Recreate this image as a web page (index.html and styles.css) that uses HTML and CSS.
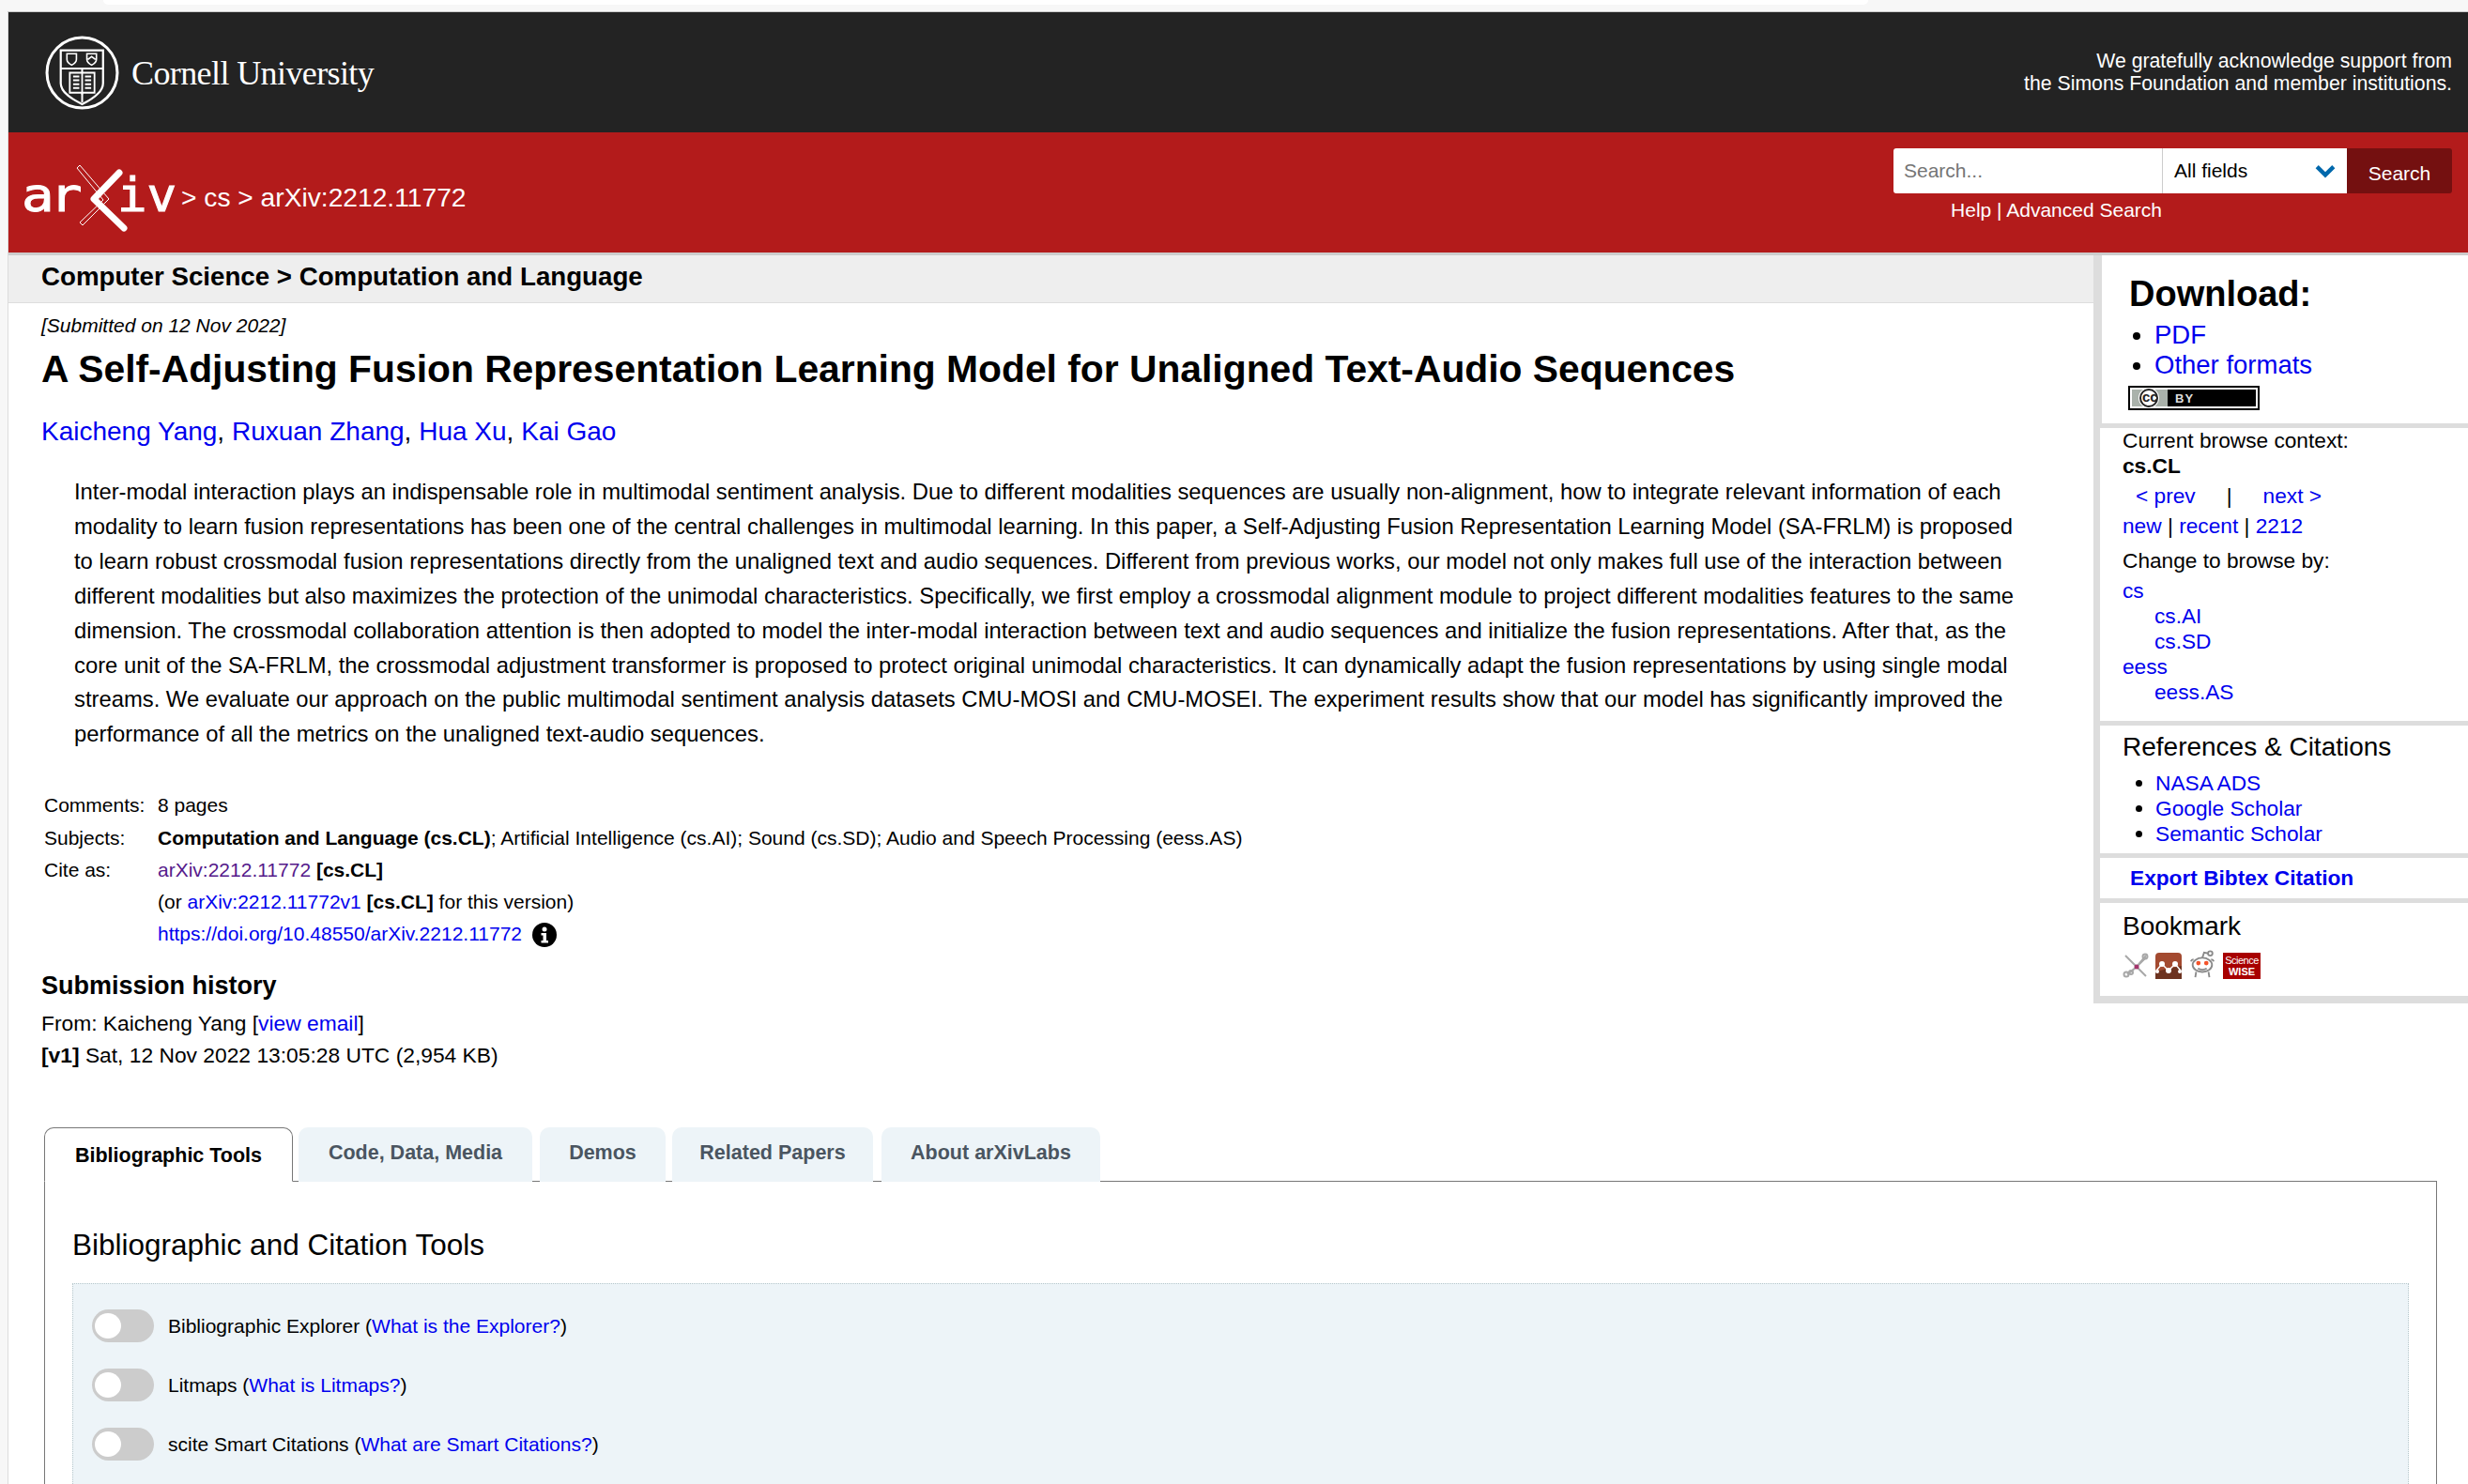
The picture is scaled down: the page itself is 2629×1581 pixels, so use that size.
FILE: index.html
```html
<!DOCTYPE html>
<html lang="en">
<head>
<meta charset="utf-8">
<title>A Self-Adjusting Fusion Representation Learning Model</title>
<link rel="stylesheet" href="styles.css">
</head>
<body>
<div class="strip"><div class="strip-pill"></div></div>
<div class="page">
  <header class="cu-bar">
    <div class="cu-logo">
      <svg class="seal" viewBox="8 8 78 78" fill="none" stroke="#fff">
        <circle cx="47" cy="47" r="37" stroke-width="3"/>
        <path d="M24.500 23.500H69V58C69 68 57 75 47 80C37 75 24.500 68 24.500 58Z" stroke-width="2.200"/>
        <path d="M24.500 42.500H69M47 42.500V78" stroke-width="2"/>
        <path d="M31 27H41V33C41 36 38 38 36 39C34 38 31 36 31 33Z" stroke-width="1.600"/>
        <path d="M52 27H62V33C62 36 59 38 57 39C55 38 52 36 52 33Z M53 33L57 30L61 33" stroke-width="1.600"/>
        <path d="M34 47H60V68H34Z" stroke-width="1.800" fill="#232323"/>
        <path d="M47 47V70" stroke-width="1.800"/>
        <path d="M37.500 51H44M37.500 55H44M37.500 59H44M37.500 63H44M50 51H56.500M50 55H56.500M50 59H56.500M50 63H56.500" stroke-width="2"/>
      </svg>
      <span class="cu-name">Cornell University</span>
    </div>
    <p class="cu-thanks">We gratefully acknowledge support from<br>the Simons Foundation and member institutions.</p>
  </header>
  <div class="red-bar">
    <div class="crumbs">
      <svg class="arxiv" viewBox="0 0 175 85">
        <text class="arxiv-text arxiv-ar" transform="scale(1.150 1)" x="2.600" y="55">ar</text>
        <text class="arxiv-text" transform="scale(1.050 1)" x="100" y="55">iv</text>
        <path class="x-thin-line" d="M62 9L65 6L96 42L92 46L68 70L65 67L90 43Z"/>
        <path class="x-solid" d="M107 14L80 42L112 73"/>
      </svg>
      <span class="crumb-text">&gt; cs &gt; arXiv:2212.11772</span>
    </div>
    <div class="search">
      <div class="search-row">
        <div class="search-input">Search...</div>
        <div class="search-select">All fields
          <svg class="chev" viewBox="0 0 20 14"><path d="M2 3L10 11L18 3" fill="none" stroke="#0068ac" stroke-width="4"/></svg>
        </div>
        <div class="search-btn">Search</div>
      </div>
      <div class="search-links"><span class="search-links-in">Help | Advanced Search</span></div>
    </div>
  </div>

  <div class="top">
    <main class="content">
      <div class="subheader">Computer Science &gt; Computation and Language</div>
      <div class="article">
        <div class="dateline">[Submitted on 12 Nov 2022]</div>
        <h1 class="title">A Self-Adjusting Fusion Representation Learning Model for Unaligned Text-Audio Sequences</h1>
        <div class="authors"><a>Kaicheng Yang</a>, <a>Ruxuan Zhang</a>, <a>Hua Xu</a>, <a>Kai Gao</a></div>
        <blockquote class="abstract">Inter-modal interaction plays an indispensable role in multimodal sentiment analysis. Due to different modalities sequences are usually non-alignment, how to integrate relevant information of each<br>modality to learn fusion representations has been one of the central challenges in multimodal learning. In this paper, a Self-Adjusting Fusion Representation Learning Model (SA-FRLM) is proposed<br>to learn robust crossmodal fusion representations directly from the unaligned text and audio sequences. Different from previous works, our model not only makes full use of the interaction between<br>different modalities but also maximizes the protection of the unimodal characteristics. Specifically, we first employ a crossmodal alignment module to project different modalities features to the same<br>dimension. The crossmodal collaboration attention is then adopted to model the inter-modal interaction between text and audio sequences and initialize the fusion representations. After that, as the<br>core unit of the SA-FRLM, the crossmodal adjustment transformer is proposed to protect original unimodal characteristics. It can dynamically adapt the fusion representations by using single modal<br>streams. We evaluate our approach on the public multimodal sentiment analysis datasets CMU-MOSI and CMU-MOSEI. The experiment results show that our model has significantly improved the<br>performance of all the metrics on the unaligned text-audio sequences.</blockquote>
        <div class="meta">
          <div class="meta-label">Comments:</div><div>8 pages</div>
          <div class="meta-label">Subjects:</div><div><b>Computation and Language (cs.CL)</b>; Artificial Intelligence (cs.AI); Sound (cs.SD); Audio and Speech Processing (eess.AS)</div>
          <div class="meta-label">Cite as:</div><div><a class="visited">arXiv:2212.11772</a> <b>[cs.CL]</b></div>
          <div></div><div>(or <a>arXiv:2212.11772v1</a> <b>[cs.CL]</b> for this version)</div>
          <div></div><div class="doi"><a>https://doi.org/10.48550/arXiv.2212.11772</a>
            <svg class="info" viewBox="0 0 26 26"><circle cx="13" cy="13" r="13" fill="#000"/><circle cx="13" cy="7" r="2.500" fill="#fff"/><path d="M9.500 11H15V19H17V21.500H9.500V19H11.500V13.500H9.500Z" fill="#fff"/></svg>
          </div>
        </div>
        <h2 class="hist-title">Submission history</h2>
        <div class="hist">From: Kaicheng Yang [<a>view email</a>]<br><b>[v1]</b> Sat, 12 Nov 2022 13:05:28 UTC (2,954 KB)</div>
      </div>
    </main>
    <aside class="side">
      <section class="side-block download">
        <h2 class="dl-title">Download:</h2>
        <ul class="dl-list"><li><a>PDF</a></li><li><a>Other formats</a></li></ul>
        <svg class="cc" viewBox="0 0 140 26">
          <rect width="140" height="26" fill="#000"/>
          <rect x="2" y="2" width="136" height="22" fill="#fff"/>
          <rect x="4" y="4" width="132" height="18" fill="#000"/>
          <rect x="4" y="4" width="38" height="18" fill="#aab2ab"/>
          <circle cx="22" cy="13" r="11" fill="#fff"/>
          <circle cx="22" cy="13" r="9" fill="none" stroke="#222" stroke-width="2"/>
          <text class="cc-cc" x="15" y="17">cc</text>
          <text class="cc-by" x="50" y="18">BY</text>
        </svg>
      </section>
      <section class="side-block browse">
        <div>Current browse context:</div>
        <div class="browse-cat"><b>cs.CL</b></div>
        <div class="prevnext"><a>&lt; prev</a><span class="pipe">|</span><a>next &gt;</a></div>
        <div class="browse-list"><a>new</a> | <a>recent</a> | <a>2212</a></div>
        <div class="change">Change to browse by:</div>
        <div class="cats">
          <div><a>cs</a></div>
          <div class="cat-sub"><a>cs.AI</a></div>
          <div class="cat-sub"><a>cs.SD</a></div>
          <div><a>eess</a></div>
          <div class="cat-sub"><a>eess.AS</a></div>
        </div>
      </section>
      <section class="side-block refs">
        <h3 class="side-h">References &amp; Citations</h3>
        <ul class="ref-list"><li><a>NASA ADS</a></li><li><a>Google Scholar</a></li><li><a>Semantic Scholar</a></li></ul>
      </section>
      <section class="side-block export"><a><b>Export Bibtex Citation</b></a></section>
      <section class="side-block bookmark">
        <h3 class="side-h bookmark-h">Bookmark</h3>
        <div class="marks">
          <svg class="mark" viewBox="0 0 28 28" fill="none" stroke="#a8a8a8" stroke-width="2"><path d="M3 3L15 15L25 25M25 5L15 15L5 23M15 15L25 3M15 15L8 21"/><circle cx="24" cy="4" r="2.500"/><circle cx="4" cy="23" r="2.500"/><circle cx="9" cy="21" r="2"/><circle cx="15" cy="15" r="2.500" fill="#a3356c" stroke="none"/></svg>
          <svg class="mark" viewBox="0 0 28 28"><rect width="28" height="28" rx="4" fill="#a34a30"/><path d="M0 20L28 14V28H0Z" fill="#6d3320"/><path d="M1 19L7 12L14 19L21 12L27 19" fill="none" stroke="#fff" stroke-width="1.500"/><circle cx="7" cy="12" r="3" fill="#fff"/><circle cx="21" cy="12" r="3" fill="#fff"/><circle cx="14" cy="19" r="3" fill="#fff"/><circle cx="2" cy="20" r="2" fill="#fff"/><circle cx="26" cy="20" r="2" fill="#fff"/></svg>
          <svg class="mark reddit" viewBox="0 0 32 32" fill="none" stroke="#8a8a8a" stroke-width="2"><ellipse cx="16" cy="17" rx="11" ry="8" fill="#fff"/><circle cx="25" cy="4" r="2.500"/><path d="M16 9L18 3L23 4M3 13A3 3 0 0 1 6 11M29 13A3 3 0 0 0 26 11M9 25L8 31M23 25L24 31M11 21C13 23 19 23 21 21"/><circle cx="11.500" cy="15" r="2.500" fill="#f4532a" stroke="none"/><circle cx="20.500" cy="15" r="2.500" fill="#f4532a" stroke="none"/></svg>
          <span class="sw"><span class="sw-a">Science</span><span class="sw-b">WISE</span></span>
        </div>
      </section>
    </aside>
  </div>

  <section class="labs">
    <nav class="tabs">
      <div class="tab active">Bibliographic Tools</div>
      <div class="tab t2">Code, Data, Media</div>
      <div class="tab t3">Demos</div>
      <div class="tab t4">Related Papers</div>
      <div class="tab t5">About arXivLabs</div>
    </nav>
    <div class="panel">
      <h2 class="panel-h">Bibliographic and Citation Tools</h2>
      <div class="toolbox">
        <div class="tool"><span class="toggle"></span><span>Bibliographic Explorer (<a>What is the Explorer?</a>)</span></div>
        <div class="tool"><span class="toggle"></span><span>Litmaps (<a>What is Litmaps?</a>)</span></div>
        <div class="tool"><span class="toggle"></span><span>scite Smart Citations (<a>What are Smart Citations?</a>)</span></div>
      </div>
    </div>
  </section>
</div>
</body>
</html>
```

FILE: styles.css
```css
* { box-sizing: border-box; }
html, body { margin: 0; padding: 0; height: 100%; overflow: hidden; }
body { background: #f7f7f7; font-family: "Liberation Sans", Arial, sans-serif; color: #000; }
a { color: #0000ee; }
.strip { height: 13px; border-bottom: 1px solid #c9c9c9; margin-left: 8px; }
.strip-pill { height: 5px; width: 1880px; margin-left: 102px; background: #fff; border-radius: 0 0 10px 10px; }
.page { margin-left: 8px; background: #fff; border-left: 1px solid #dcdcdc; height: 1568px; overflow: hidden; }

.cu-bar { height: 128px; background: #232323; color: #fff; display: flex; justify-content: space-between; align-items: center; padding: 0 17px 0 39px; }
.cu-logo { display: flex; align-items: center; gap: 13px; }
.seal { width: 79px; height: 79px; }
.cu-name { font-family: "Liberation Serif", serif; font-size: 36px; letter-spacing: -0.6px; position: relative; top: 1px; }
.cu-thanks { margin: 0; text-align: right; font-size: 21.250px; line-height: 24px; }

.red-bar { height: 131px; background: #b31b1b; border-bottom: 3px solid #ccc; display: flex; justify-content: space-between; padding: 0 17px 0 11px; color: #fff; }
.crumbs { display: flex; align-items: center; height: 128px; }
.arxiv { width: 175px; height: 85px; flex: none; margin-top: 15px; }
.arxiv-text { font-family: "DejaVu Sans Mono", monospace; font-size: 50px; fill: #fff; stroke: #fff; stroke-width: 1; }
.arxiv-ar { letter-spacing: -4px; }
.x-thin-line { fill: none; stroke: #fff; stroke-width: 1; }
.x-solid { fill: none; stroke: #fff; stroke-width: 7; stroke-linecap: round; stroke-linejoin: round; }
.crumb-text { font-size: 28.200px; margin: 10px 0 0 -2px; }

.search { padding-top: 17px; width: 595px; }
.search-row { display: flex; height: 48px; }
.search-input { width: 286px; background: #fff; border-radius: 3px 0 0 3px; color: #757575; font-size: 21px; line-height: 48px; padding-left: 11px; }
.search-select { width: 197px; background: #fff; border-left: 1px solid #ccc; color: #000; font-size: 21px; line-height: 48px; padding-left: 12px; display: flex; justify-content: space-between; align-items: center; padding-right: 12px; }
.chev { width: 22px; height: 16px; }
.search-btn { width: 112px; background: #741010; border-radius: 0 3px 3px 0; text-align: center; font-size: 21px; line-height: 54px; color: #fff; }
.search-links { font-size: 21px; line-height: 24px; margin-top: 6px; width: 286px; text-align: right; }

.top { display: flex; height: 926px; }
.content { flex: 1; min-width: 0; }
.subheader { height: 51px; background: #eee; border-bottom: 1px solid #ddd; font-weight: 700; font-size: 27.700px; line-height: 46px; padding-left: 35px; }
.article { padding-left: 35px; }
.dateline { font-style: italic; font-size: 21px; line-height: 24px; margin-top: 12px; }
.title { margin: 9px 0 0; font-size: 40.800px; line-height: 50px; font-weight: 700; }
.authors { margin-top: 26px; font-size: 28px; line-height: 32px; }
.abstract { margin: 30px 0 0 35px; font-size: 23.800px; line-height: 36.900px; white-space: nowrap; }
.meta { display: grid; grid-template-columns: 121px 1fr; margin: 40px 0 0 3px; font-size: 21px; line-height: 34.300px; }
.meta > div { white-space: nowrap; }
.doi { display: flex; align-items: center; gap: 11px; }
.visited { color: #551a8b; }
.info { width: 26px; height: 26px; }
.hist-title { margin: 20px 0 0; font-size: 27px; line-height: 34px; font-weight: 700; }
.hist { margin-top: 6px; font-size: 22.800px; line-height: 34.500px; }

.side { width: 399px; flex: none; border-left: 7px solid #ddd; border-bottom: 8px solid #ddd; height: 797px; }
.side-block { border-bottom: 5px solid #ddd; padding-left: 24px; font-size: 22.700px; line-height: 27px; }
.side-block:last-child { border-bottom: 0; }
.download { height: 184px; padding-left: 29px; margin-left: 2px; box-shadow: -2px 0 0 #ddd; }
.dl-title { margin: 0; padding-top: 19px; font-size: 38px; line-height: 44px; font-weight: 700; }
.dl-list { margin: 6px 0 0; padding-left: 27px; font-size: 27.500px; line-height: 32px; }
.cc { display: block; width: 140px; height: 26px; margin: 6px 0 0 -1px; }
.cc-cc { font-family: "Liberation Sans", sans-serif; font-weight: 700; font-size: 15px; fill: #222; }
.cc-by { font-family: "Liberation Sans", sans-serif; font-weight: 700; font-size: 13px; fill: #ddd; letter-spacing: 1px; }
.browse { height: 317px; }
.browse-cat { line-height: 27px; }
.prevnext { margin-top: 5px; padding-left: 14px; display: flex; }
.pipe { margin: 0 33px; }
.browse-list { margin-top: 5px; }
.change { margin-top: 10px; }
.cats { margin-top: 5px; }
.cat-sub { padding-left: 34px; }
.refs { height: 141px; }
.side-h { margin: 0; font-size: 28px; font-weight: 400; line-height: 36px; padding-top: 5px; }
.ref-list { margin: 7px 0 0; padding-left: 35px; line-height: 27px; }
.export { height: 48px; padding-left: 32px; line-height: 43px; }
.bookmark { height: 99px; }
.bookmark-h { padding-top: 7px; }
.marks { display: flex; align-items: flex-end; gap: 7px; margin-top: 4px; height: 34px; }
.mark { width: 28px; height: 28px; flex: none; }
.reddit { width: 30px; height: 32px; }
.sw { width: 40px; height: 28px; background: #a80000; color: #fff; display: flex; flex-direction: column; align-items: center; justify-content: center; font-family: "Liberation Sans", sans-serif; }
.sw-a { font-size: 11px; line-height: 12px; letter-spacing: -0.5px; }
.sw-b { font-size: 11px; line-height: 12px; font-weight: 700; }

.labs { padding: 0 33px 0 38px; margin-top: 3px; }
.tabs { display: flex; height: 58px; border-bottom: 1px solid #777; }
.tab { background: #edf4f8; border-radius: 10px 10px 0 0; color: #4a5560; font-weight: 700; font-size: 21.500px; line-height: 54px; text-align: center; height: 58px; }
.active { width: 265px; background: #fff; color: #000; border: 1px solid #777; border-bottom: 1px solid #fff; line-height: 58px; }
.t2 { width: 249px; margin-left: 6px; }
.t3 { width: 134px; margin-left: 8px; }
.t4 { width: 214px; margin-left: 7px; }
.t5 { width: 233px; margin-left: 9px; }
.panel { border: 1px solid #777; border-top: 0; padding: 0 29px; height: 400px; }
.panel-h { margin: 0; padding-top: 47px; font-size: 31.500px; line-height: 40px; font-weight: 400; }
.toolbox { margin-top: 21px; background: #edf4f8; border: 1px dotted #b8c8cc; border-bottom: 0; height: 300px; padding: 27px 20px 0; }
.tool { display: flex; align-items: center; gap: 15px; height: 35px; margin-bottom: 28px; font-size: 21px; }
.toggle { width: 66px; height: 35px; border-radius: 18px; background: #ccc; position: relative; flex: none; }
.toggle::before { content: ""; position: absolute; left: 3px; top: 4px; width: 28px; height: 27px; border-radius: 50%; background: #fff; }
```
